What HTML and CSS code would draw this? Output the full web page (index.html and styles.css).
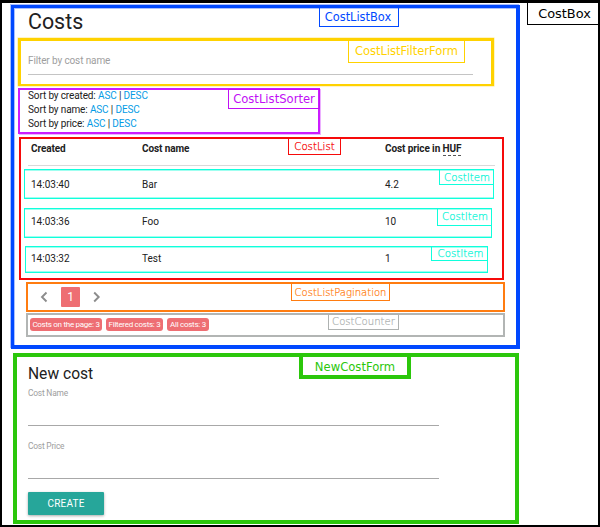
FILE: index.html
```html
<!DOCTYPE html>
<html lang="en">
<head>
<meta charset="utf-8">
<title>Costs</title>
<link rel="stylesheet" href="styles.css">
</head>
<body>
<main class="cost-box">
  <span class="tag tag-cost-box">CostBox</span>
  <section class="list-box">
    <span class="tag tag-list-box">CostListBox</span>
    <h1>Costs</h1>
    <div class="filter">
      <span class="tag tag-filter">CostListFilterForm</span>
      <div class="filter-field">Filter by cost name</div>
    </div>
    <div class="sorter">
      <span class="tag tag-sorter">CostListSorter</span>
      <div>Sort by created: <a>ASC</a> | <a>DESC</a></div>
      <div>Sort by name: <a>ASC</a> | <a>DESC</a></div>
      <div>Sort by price: <a>ASC</a> | <a>DESC</a></div>
    </div>
    <div class="list">
      <span class="tag tag-list">CostList</span>
      <div class="columns list-head"><span>Created</span><span>Cost name</span><span>Cost price in <abbr>HUF</abbr></span></div>
      <div class="columns item item-1"><span>14:03:40</span><span>Bar</span><span>4.2</span><span class="tag tag-item">CostItem</span></div>
      <div class="columns item item-2"><span>14:03:36</span><span>Foo</span><span>10</span><span class="tag tag-item">CostItem</span></div>
      <div class="columns item item-3"><span>14:03:32</span><span>Test</span><span>1</span><span class="tag tag-item">CostItem</span></div>
    </div>
    <div class="pagination">
      <span class="tag tag-pagination">CostListPagination</span>
      <svg width="8" height="12" viewBox="0 0 8 12"><path d="M6.500 1.500 2 6l4.500 4.500"/></svg>
      <span class="page">1</span>
      <svg width="8" height="12" viewBox="0 0 8 12"><path d="M1.200 1.500 5.700 6l-4.500 4.500"/></svg>
    </div>
    <div class="counter">
      <span class="tag tag-counter">CostCounter</span>
      <span class="chip chip-page">Costs on the page: 3</span>
      <span class="chip chip-filtered">Filtered costs: 3</span>
      <span class="chip chip-all">All costs: 3</span>
    </div>
  </section>
  <section class="new-form">
    <span class="tag tag-new">NewCostForm</span>
    <h2>New cost</h2>
    <div class="field">Cost Name</div>
    <div class="field">Cost Price</div>
    <button>CREATE</button>
  </section>
</main>
</body>
</html>
```
FILE: styles.css
```css
* { box-sizing: border-box; }
body {
  margin: 0;
  background: #fff;
  color: #212121;
  font: 10px/14.4px Roboto, sans-serif;
}
.cost-box {
  position: relative;
  height: 527px;
  border: 2px solid #000;
  border-top-width: 3px;
  padding: 2px 0 0 9px;
}
.tag {
  position: absolute;
  display: flex;
  align-items: center;
  justify-content: center;
  border: 1px solid;
  padding-top: 1px;
  font-family: "DejaVu Sans", sans-serif;
  font-weight: 400;
  line-height: 1;
  letter-spacing: 0;
  white-space: nowrap;
}
.tag-cost-box { top: -1px; right: -1px; width: 72px; height: 23px; color: #000; font-size: 12.9px; padding: 2px 0 0 3px; }
.list-box {
  position: relative;
  width: 509px;
  height: 344px;
  border: solid #0048ff;
  border-width: 3px 4px 4px 3px;
  box-shadow: -1px -1px 0 #a9c0ff, inset 1px 1px 0 #a9c0ff;
  padding-left: 4px;
}
.tag-list-box { left: 305px; top: -1px; width: 80px; height: 20px; color: #0048ff; font-size: 11.4px; padding: 2px 2px 0 0; }
h1 {
  margin: 0;
  padding-left: 10px;
  height: 30px;
  font-size: 21.4px;
  font-weight: 400;
  line-height: 28px;
}
.filter {
  position: relative;
  width: 476px;
  height: 48px;
  border: 3px solid #ffd200;
  border-bottom-width: 2px;
  box-shadow: 0 0 0 .5px #ffe98a;
  padding: 11px 18px 0 7px;
}
.filter-field { height: 23px; border-bottom: 1px solid #c4c4c4; line-height: 18px; color: #9e9e9e; font-size: 10px; letter-spacing: -.12px; }
.tag-filter { left: 327px; top: -1px; width: 117px; height: 23px; color: #ffd200; font-size: 11.5px; }
.sorter {
  position: relative;
  width: 302px;
  height: 46px;
  margin-top: 2px;
  border: 2px solid #cc1cff;
  box-shadow: 1px 1px 0 #ecb0ff;
  padding-left: 8px;
  font-size: 10px;
  line-height: 14.2px;
  letter-spacing: -.13px;
}
.sorter div { position: relative; top: -1px; }
.sorter a { color: #039be5; }
.tag-sorter { right: -2px; top: -1px; width: 92px; height: 20px; color: #c10ff5; font-size: 11.6px; padding: 2px 0 0 0; }
.list {
  position: relative;
  width: 485px;
  height: 143px;
  margin: 3px 0 0 1px;
  border: 2px solid #f60a0a;
  padding-left: 3px;
}
.tag-list { left: 267px; top: -1px; width: 53px; height: 17px; color: #f60a0a; font-size: 10.2px; font-weight: 200; -webkit-text-stroke: .25px; }
.columns { display: grid; grid-template-columns: 111px 243px auto; }
.list-head {
  width: 467px;
  height: 27px;
  margin-left: 4px;
  padding: 3px 0 0 3px;
  border-bottom: 1px solid #d9d9d9;
  font-size: 10px;
  letter-spacing: -.1px;
  font-weight: 700;
}
abbr { border-bottom: 1px dashed #555; display: inline-block; line-height: 13px; }
.item {
  position: relative;
  align-items: center;
  border: 1px solid #10ffdc;
  box-shadow: inset 0 -1px 0 #9ffff0, inset 0 1px 0 #9ffff0;
}
.item-1 { width: 470px; height: 30px; margin-top: 3px; padding: 2px 0 0 6px; }
.item-2 { width: 468px; height: 30px; margin-top: 9px; padding: 0 0 2px 6px; }
.item-3 { width: 463px; height: 27px; margin: 8px 0 0 1px; padding: 0 0 0 5px; }
.tag-item { right: -1px; top: -1px; width: 55px; height: 16px; border-color: #10ffdc; color: #10f5d8; font-size: 10.2px; font-weight: 200; -webkit-text-stroke: .25px; padding: 3px 0 0 1px; }
.item-2 .tag-item { height: 18px; padding-top: 1px; }
.item-3 .tag-item { height: 15px; width: 57px; padding: 1px 0 0 2px; }
.pagination {
  position: relative;
  display: flex;
  align-items: center;
  width: 479px;
  height: 30px;
  margin: 2px 0 0 8px;
  border: 2px solid #ff7c10;
  padding-left: 12px;
}
.pagination svg { fill: none; stroke: #8c8c8c; stroke-width: 1.9; }
.page {
  width: 19px;
  height: 20px;
  margin: 0 13px 0 13px;
  border-radius: 1px;
  background: #ee6e73;
  color: #fff;
  font-size: 12px;
  line-height: 20px;
  text-align: center;
}
.tag-pagination { left: 263px; top: -1px; width: 99px; height: 18px; color: #ff7c10; font-size: 10px; font-weight: 200; -webkit-text-stroke: .2px; }
.counter {
  position: relative;
  display: flex;
  width: 479px;
  height: 24px;
  margin: 1px 0 0 8px;
  border: 2px solid #b2b5b4;
  padding: 3px 0 0 2px;
  gap: 4px;
}
.chip {
  height: 13px;
  border-radius: 3px;
  background: #ee6e73;
  color: #fff;
  font-size: 8px;
  letter-spacing: -.28px;
  line-height: 13px;
  text-align: center;
  white-space: nowrap;
}
.chip-page { width: 72px; }
.chip-filtered { width: 57px; }
.chip-all { width: 42px; }
.tag-counter { left: 300px; top: -1px; width: 71px; height: 16px; color: #aeb2b1; font-size: 10.1px; font-weight: 200; -webkit-text-stroke: .2px; padding-top: 1px; }
.new-form {
  position: relative;
  width: 506px;
  height: 171px;
  margin: 4px 0 0 2px;
  border: 4px solid #2bc70b;
  padding: 7px 76px 0 11px;
}
.tag-new { left: 282px; top: -4px; width: 112px; height: 26px; border-width: 4px; color: #2bc70b; font-size: 11.6px; padding-top: 3px; }
h2 { margin: 0 0 5px; font-size: 15.6px; font-weight: 400; line-height: 21px; height: 20px; }
.field {
  height: 37px;
  margin-bottom: 16px;
  border-bottom: 1px solid #a8a8a8;
  color: #9e9e9e;
  font-size: 8.400px;
  letter-spacing: -.2px;
  line-height: 9px;
}
.field + .field { margin-bottom: 13px; }
button {
  display: block;
  width: 76px;
  height: 23px;
  border: 0;
  border-radius: 1px;
  padding: 0;
  background: #26a69a;
  box-shadow: 0 1px 3px #0005;
  color: #fff;
  font: 10px/23px Roboto, sans-serif;
  letter-spacing: .2px;
}
```
